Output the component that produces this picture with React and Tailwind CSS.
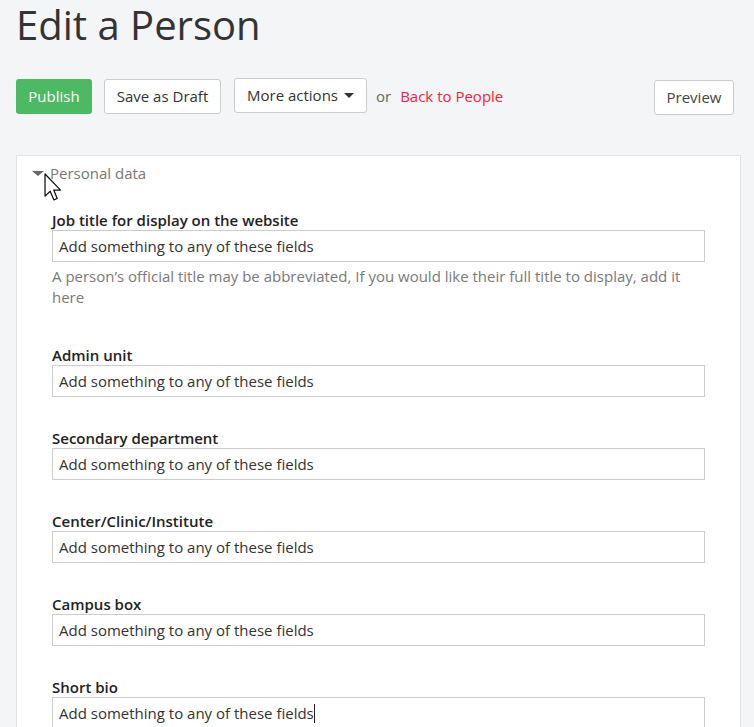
import React from "react";

function Field({ label, help, last }) {
  return (
    <div className="flex flex-col">
      <div className="text-[15px] leading-[20px] font-semibold text-[#222]">{label}</div>
      <div className="h-[32px] w-[653px] border border-[#cccccc] bg-white pl-[6px] flex items-center text-[15px] text-[#333]">
        <span>Add something to any of these fields</span>
        {last && <span className="inline-block w-[1px] h-[19px] bg-[#222]" />}
      </div>
      {help && (
        <div className="mt-[4px] text-[15px] leading-[21px] text-[#7a7a7a] w-[653px]">{help}</div>
      )}
    </div>
  );
}

export default function App() {
  return (
    <div
      className="h-[727px] w-[754px] bg-[#f4f5f7] overflow-hidden"
      style={{ fontFamily: '"Open Sans", "Noto Sans", sans-serif' }}
    >
      <div className="pl-[16px] pt-[0px]">
        <h1 className="text-[40px] leading-[50px] text-[#333] font-normal">Edit a Person</h1>
        <div className="mt-[29px] flex items-center h-[35px] w-[718px]">
          <button className="h-[35px] w-[76px] rounded-[3px] bg-[#4cb963] text-white text-[15px]">Publish</button>
          <button className="ml-[12px] h-[35px] w-[117px] rounded-[3px] border border-[#cccccc] bg-white text-[#333] text-[15px]">Save as Draft</button>
          <button className="ml-[13px] mb-[2px] h-[35px] w-[133px] rounded-[3px] border border-[#cccccc] bg-white text-[#333] text-[15px] flex items-center justify-center gap-[6px]">
            <span>More actions</span>
            <svg width="10" height="6" viewBox="0 0 10 6"><path d="M0 0 L10 0 L5 5 Z" fill="#333" /></svg>
          </button>
          <span className="ml-[9px] text-[15px] text-[#666]">or</span>
          <span className="ml-[9px] text-[15px] text-[#f0243c]">Back to People</span>
          <div className="flex-1" />
          <button className="mt-[2px] h-[35px] w-[80px] rounded-[3px] border border-[#cccccc] bg-white text-[#444] text-[15px]">Preview</button>
        </div>
        <div className="relative mt-[41px] w-[725px] border border-[#e3e4e6] bg-white pb-[40px]">
          <div className="pt-[7px] pl-[15px] flex items-center h-[27px]">
            <svg width="12" height="5" viewBox="0 0 12 5"><path d="M0 0 L12 0 L6 5 Z" fill="#666" /></svg>
            <span className="ml-[6px] text-[15px] leading-[20px] text-[#777]">Personal data</span>
          </div>
          <svg className="absolute left-[27px] top-[17px]" width="19" height="28" viewBox="0 0 13.5 20">
            <path d="M0.7 0.7 L0.7 16.5 L4.4 13 L7 19.2 L9.4 18.2 L6.9 12.2 L11.8 12.2 Z" fill="white" stroke="#111" strokeWidth="0.9" strokeLinejoin="round" />
          </svg>
          <div className="pl-[35px] pt-[27px] flex flex-col gap-[31px]">
            <div className="mb-[6px]">
              <Field
                label="Job title for display on the website"
                help="A person’s official title may be abbreviated, If you would like their full title to display, add it here"
              />
            </div>
            <Field label="Admin unit" />
            <Field label="Secondary department" />
            <Field label="Center/Clinic/Institute" />
            <Field label="Campus box" />
            <Field label="Short bio" last />
          </div>
        </div>
      </div>
    </div>
  );
}
